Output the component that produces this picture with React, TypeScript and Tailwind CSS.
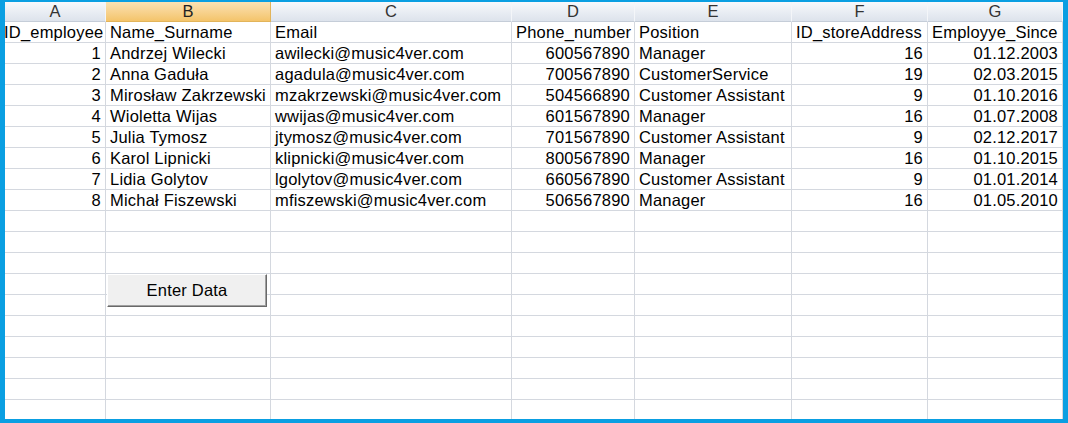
import React from 'react'

const cols = [
    { key: 'A', w: 'w-[101px]' },
    { key: 'B', w: 'w-[165px]' },
    { key: 'C', w: 'w-[241px]' },
    { key: 'D', w: 'w-[123px]' },
    { key: 'E', w: 'w-[157px]' },
    { key: 'F', w: 'w-[136px]' },
    { key: 'G', w: 'w-[135px]' },
]

// right aligned columns: A, D, F, G
const right = [true, false, false, true, false, true, true]

const rows: string[][] = [
    ['ID_employee', 'Name_Surname', 'Email', 'Phone_number', 'Position', 'ID_storeAddress', 'Employye_Since'],
    ['1', 'Andrzej Wilecki', 'awilecki@music4ver.com', '600567890', 'Manager', '16', '01.12.2003'],
    ['2', 'Anna Gaduła', 'agadula@music4ver.com', '700567890', 'CustomerService', '19', '02.03.2015'],
    ['3', 'Mirosław Zakrzewski', 'mzakrzewski@music4ver.com', '504566890', 'Customer Assistant', '9', '01.10.2016'],
    ['4', 'Wioletta Wijas', 'wwijas@music4ver.com', '601567890', 'Manager', '16', '01.07.2008'],
    ['5', 'Julia Tymosz', 'jtymosz@music4ver.com', '701567890', 'Customer Assistant', '9', '02.12.2017'],
    ['6', 'Karol Lipnicki', 'klipnicki@music4ver.com', '800567890', 'Manager', '16', '01.10.2015'],
    ['7', 'Lidia Golytov', 'lgolytov@music4ver.com', '660567890', 'Customer Assistant', '9', '01.01.2014'],
    ['8', 'Michał Fiszewski', 'mfiszewski@music4ver.com', '506567890', 'Manager', '16', '01.05.2010'],
]

const TOTAL_ROWS = 19

const App = () => {
    const allRows = [...rows]
    while (allRows.length < TOTAL_ROWS) allRows.push(['', '', '', '', '', '', ''])

    return (
        <div className="w-[1068px] h-[423px] bg-[#0a9fe2] pt-[2px] pl-[5px] pr-[5px] pb-[4px] font-['Liberation_Sans',Arial,sans-serif]">
            <div className="relative w-full h-full bg-white overflow-hidden">
                {/* column headers */}
                <div className="flex h-[20px]">
                    {cols.map((c) => (
                        <div
                            key={c.key}
                            className={
                                c.key === 'B'
                                    ? `${c.w} shrink-0 h-full flex items-center justify-center border-r border-b border-[#e2b45a] bg-gradient-to-b from-[#fbe2b3] to-[#f4c46a] text-[16.5px] text-[#222] leading-none`
                                    : `${c.w} shrink-0 h-full flex items-center justify-center border-r border-b border-r-[#f4f6f9] border-b-[#c5cdd8] bg-gradient-to-b from-[#f7f9fc] to-[#dde3ec] text-[16.5px] text-[#333] leading-none`
                            }
                        >
                            {c.key}
                        </div>
                    ))}
                </div>

                {/* cells */}
                {allRows.map((r, i) => (
                    <div key={i} className="flex h-[21px]">
                        {cols.map((c, j) => (
                            <div
                                key={c.key}
                                className={`${c.w} shrink-0 h-full border-r border-b border-[#d4d8df] flex items-center overflow-hidden whitespace-nowrap text-[16.5px] tracking-[0.2px] text-black leading-none pt-[1px] ${
                                    right[j] && i > 0 ? 'justify-end pr-[4px]' : j === 0 ? 'pl-0' : 'pl-[4px]'
                                }`}
                            >
                                <span className={j === 0 && i === 0 ? '-ml-[1px]' : ''}>{r[j]}</span>
                            </div>
                        ))}
                    </div>
                ))}

                {/* form button sitting over the sheet */}
                <button className="absolute left-[102px] top-[272px] w-[160px] h-[33px] bg-[#f0f0f0] border border-t-white border-l-white border-r-[#696969] border-b-[#696969] shadow-[inset_-1px_-1px_0_#a0a0a0] text-[16.5px] tracking-[0.2px] text-black leading-none">
                    Enter Data
                </button>
            </div>
        </div>
    )
}

export default App
